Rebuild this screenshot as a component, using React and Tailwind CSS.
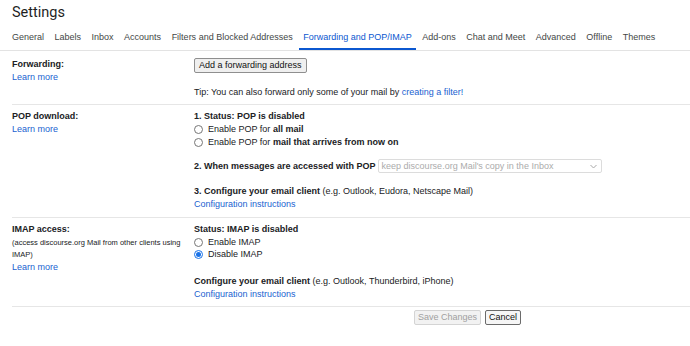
const tabs = [
  "General",
  "Labels",
  "Inbox",
  "Accounts",
  "Filters and Blocked Addresses",
  "Forwarding and POP/IMAP",
  "Add-ons",
  "Chat and Meet",
  "Advanced",
  "Offline",
  "Themes",
];

function Radio({ checked, children, h }) {
  return (
    <label className={"flex items-center " + (h === 12 ? "h-[12px]" : "h-[13px]")}>
      <span
        className={
          checked
            ? "w-[9px] h-[9px] rounded-full border border-[#1a73e8] flex items-center justify-center mr-[5px]"
            : "w-[9px] h-[9px] rounded-full border border-[#767676] mr-[5px]"
        }
      >
        {checked && <span className="w-[5px] h-[5px] rounded-full bg-[#1a73e8]" />}
      </span>
      <span>{children}</span>
    </label>
  );
}

function LearnMore() {
  return <div className="text-[#1a5fd0] leading-[13px]">Learn more</div>;
}

export default function App() {
  return (
    <div className="w-[690px] h-[346px] bg-white text-[#202124] overflow-hidden font-['Liberation_Sans',_Arial,_sans-serif] text-[9px]">
      <div className="px-[12px] pt-[4px] h-[26px] font-['Roboto',_sans-serif] text-[14.5px] leading-[18px] text-[#1f1f1f]">
        Settings
      </div>
      <div className="flex pl-[12px] gap-[10.5px] border-b border-[#e3e3e3] h-[25px] text-[9px] whitespace-nowrap">
        {tabs.map((t) =>
          t === "Forwarding and POP/IMAP" ? (
            <div
              key={t}
              className="flex items-center text-[#0b57d0] border-b-[2px] border-[#0b57d0] px-[4px] -mx-[4px] pt-[2px]"
            >
              {t}
            </div>
          ) : (
            <div key={t} className="flex items-center text-[#444746]">
              {t}
            </div>
          )
        )}
      </div>

      <div className="pl-[12px] leading-[13px]">
        <div className="grid grid-cols-[182px_1fr] border-b border-[#e6e6e6] pt-[7px] pb-[5px]">
          <div>
            <div className="font-bold">Forwarding:</div>
            <LearnMore />
          </div>
          <div>
            <button className="h-[15px] px-[4px] border border-[#8f8f8f] rounded-[2px] bg-[#efefef] text-[9px] leading-[13px] text-[#111]">
              Add a forwarding address
            </button>
            <div className="h-[13px]" />
            <div>
              Tip: You can also forward only some of your mail by{" "}
              <span className="text-[#1a5fd0]">creating a filter!</span>
            </div>
          </div>
        </div>

        <div className="grid grid-cols-[182px_1fr] border-b border-[#e6e6e6] pt-[5px] pb-[6px]">
          <div>
            <div className="font-bold">POP download:</div>
            <LearnMore />
          </div>
          <div>
            <div className="font-bold">1. Status: POP is disabled</div>
            <Radio>
              Enable POP for <b>all mail</b>
            </Radio>
            <Radio>
              Enable POP for <b>mail that arrives from now on</b>
            </Radio>
            <div className="h-[10px]" />
            <div className="flex items-center h-[14px]">
              <span className="font-bold mr-[2px]">2. When messages are accessed with POP</span>
              <div className="w-[224px] h-[14px] border border-[#dcdcdc] rounded-[2px] flex items-center justify-between pl-[3px] pr-[4px] text-[#ababab]">
                <span>keep discourse.org Mail's copy in the Inbox</span>
                <svg width="7" height="5" viewBox="0 0 7 5">
                  <path d="M0.5 1 L3.5 4 L6.5 1" fill="none" stroke="#a8a8a8" strokeWidth="1" />
                </svg>
              </div>
            </div>
            <div className="h-[12px]" />
            <div>
              <b>3. Configure your email client</b> (e.g. Outlook, Eudora, Netscape Mail)
            </div>
            <div className="text-[#1a5fd0]">Configuration instructions</div>
          </div>
        </div>

        <div className="grid grid-cols-[182px_1fr] border-b border-[#e6e6e6] pt-[5px] pb-[5px]">
          <div>
            <div className="font-bold">IMAP access:</div>
            <div className="text-[7.5px] leading-[12px] mt-px whitespace-nowrap">
              (access discourse.org Mail from other clients using
              <br />
              IMAP)
            </div>
            <LearnMore />
          </div>
          <div>
            <div className="font-bold">Status: IMAP is disabled</div>
            <Radio h={12}>Enable IMAP</Radio>
            <Radio h={12} checked>
              Disable IMAP
            </Radio>
            <div className="h-[15px]" />
            <div>
              <b>Configure your email client</b> (e.g. Outlook, Thunderbird, iPhone)
            </div>
            <div className="text-[#1a5fd0]">Configuration instructions</div>
          </div>
        </div>

        <div className="flex gap-[4px] pl-[402px] pt-[3px]">
          <button className="h-[15px] px-[3px] border border-[#d4d4d4] rounded-[2px] bg-[#f2f2f2] text-[#a0a0a0] text-[9px] leading-[13px]">
            Save Changes
          </button>
          <button className="h-[15px] px-[3px] border border-[#6b6b6b] rounded-[2px] bg-[#f6f6f6] text-[#111] text-[9px] leading-[13px]">
            Cancel
          </button>
        </div>
      </div>
    </div>
  );
}
